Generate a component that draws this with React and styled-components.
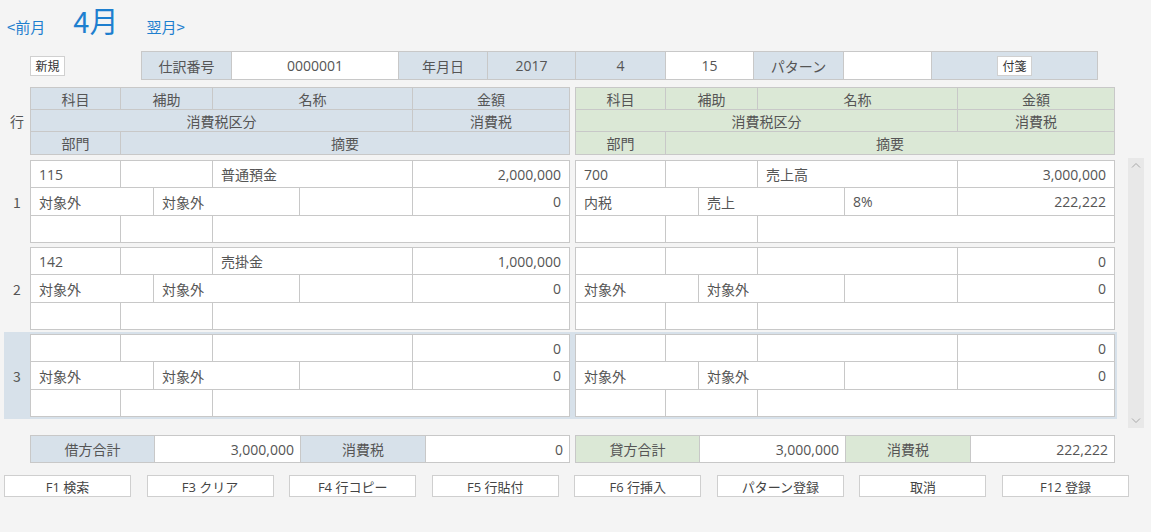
import React from 'react'
import styled, { createGlobalStyle } from 'styled-components'

const BLUE = '#d7e1ea'
const GREEN = '#dbe8d6'
const LINE = '#c8c8c8'

const GlobalStyle = createGlobalStyle`
  body {
    margin: 0;
    background: #f4f4f4;
    font-family: "Open Sans", "Noto Sans CJK JP", sans-serif;
    color: #555;
  }
  * { box-sizing: border-box; }
`

const Page = styled.div`
  width: 1151px;
  height: 532px;
  overflow: hidden;
`

const Nav = styled.div`
  display: flex;
  align-items: baseline;
  height: 51px;
  padding: 3px 0 0 7px;
  color: #1e7fcf;
`
const NavLink = styled.span`
  font-size: 15px;
  font-family: "Noto Sans CJK JP", sans-serif;
`
const Month = styled.span`
  font-size: 29px;
  line-height: 34px;
  margin: 0 28px;
  font-family: "Noto Sans CJK JP", sans-serif;
`

const Toolbar = styled.div`
  display: flex;
  align-items: center;
  height: 29px;
  padding-left: 30px;
`
const SmallButton = styled.div`
  display: flex;
  align-items: center;
  justify-content: center;
  width: ${p => p.$w || 'auto'};
  height: 20px;
  padding: 0 4px;
  white-space: nowrap;
  background: #fff;
  border: 1px solid #d0d0d0;
  font-size: 12px;
  color: #333;
  font-family: "Noto Sans CJK JP", sans-serif;
`
const HeaderBar = styled.div`
  display: grid;
  grid-template-columns: 90px 167px 89px 88px 90px 88px 90px 88px 165px;
  height: 29px;
  margin-left: 76px;
  border: 1px solid ${LINE};
`
const BarCell = styled.div`
  display: flex;
  align-items: center;
  justify-content: center;
  background: ${p => (p.$label ? BLUE : '#fff')};
  border-right: ${p => (p.$last ? 'none' : `1px solid ${LINE}`)};
  font-size: 14px;
`

const Line = styled.div`
  display: flex;
  padding: ${p => p.$pad || '0'};
  margin-top: ${p => p.$mt || '0'};
  background: ${p => (p.$active ? BLUE : 'transparent')};
`
const RowLabel = styled.div`
  width: 26px;
  flex: none;
  display: flex;
  align-items: center;
  justify-content: center;
  font-size: 14px;
  font-family: "Noto Sans CJK JP", sans-serif;
`
const Pair = styled.div`
  display: flex;
  gap: 5px;
`

const Table = styled.div`
  display: grid;
  width: 540px;
  grid-template-columns: 90px 33px 59px 87px 113px 157px;
  grid-template-rows: ${p => p.$rows};
  border-top: 1px solid ${LINE};
  border-left: 1px solid ${LINE};
  background: ${p => p.$bg || '#fff'};
`
const Cell = styled.div`
  grid-column: span ${p => p.$span || 1};
  display: flex;
  align-items: center;
  justify-content: ${p => (p.$right ? 'flex-end' : p.$center ? 'center' : 'flex-start')};
  padding: 0 8px;
  border-right: 1px solid ${LINE};
  border-bottom: 1px solid ${LINE};
  font-size: 14px;
  white-space: nowrap;
`

const ScrollArea = styled.div`
  display: flex;
  height: 270px;
  margin-top: 3px;
`
const Rows = styled.div`
  display: flex;
  flex-direction: column;
  margin-left: 4px;
`
const Scrollbar = styled.div`
  width: 16px;
  margin-left: 11px;
  background: #e8e8e8;
  display: flex;
  flex-direction: column;
  justify-content: space-between;
  align-items: center;
  padding: 4px 0;
`

const TotalsRow = styled.div`
  display: flex;
  gap: 5px;
  margin-top: 7px;
  padding-left: 30px;
`
const TotalBox = styled.div`
  display: grid;
  width: 540px;
  height: 28px;
  grid-template-columns: 124px 146px 125px 143px;
  border: 1px solid ${LINE};
  background: #fff;
`
const TotalCell = styled.div`
  display: flex;
  align-items: center;
  justify-content: ${p => (p.$label ? 'center' : 'flex-end')};
  padding: 0 6px;
  background: ${p => p.$label || '#fff'};
  border-right: ${p => (p.$last ? 'none' : `1px solid ${LINE}`)};
  font-size: 14px;
`

const ButtonBar = styled.div`
  display: grid;
  grid-template-columns: repeat(8, 1fr);
  gap: 15.5px;
  width: 1125px;
  margin: 12px 0 0 4px;
`
const FnButton = styled.div`
  display: flex;
  align-items: center;
  justify-content: center;
  height: 22px;
  background: #fff;
  border: 1px solid #cfcfcf;
  font-size: 13px;
  color: #444;
`

const Chevron = ({ up }) => (
  <svg width="10" height="6" viewBox="0 0 10 6">
    <path
      d={up ? 'M1 5.5 L5 1.5 L9 5.5' : 'M1 0.5 L5 4.5 L9 0.5'}
      fill="none"
      stroke="#a8a8a8"
      strokeWidth="1"
    />
  </svg>
)

function HeaderTable({ bg }) {
  return (
    <Table $bg={bg} $rows="22px 22px 23px">
      <Cell $center>科目</Cell>
      <Cell $center $span={2}>補助</Cell>
      <Cell $center $span={2}>名称</Cell>
      <Cell $center>金額</Cell>
      <Cell $center $span={5}>消費税区分</Cell>
      <Cell $center>消費税</Cell>
      <Cell $center>部門</Cell>
      <Cell $center $span={5}>摘要</Cell>
    </Table>
  )
}

function EntryTable({ top, mid }) {
  return (
    <Table $rows="27px 28px 27px">
      <Cell>{top[0]}</Cell>
      <Cell $span={2}>{top[1]}</Cell>
      <Cell $span={2}>{top[2]}</Cell>
      <Cell $right>{top[3]}</Cell>
      <Cell $span={2}>{mid[0]}</Cell>
      <Cell $span={2}>{mid[1]}</Cell>
      <Cell>{mid[2]}</Cell>
      <Cell $right>{mid[3]}</Cell>
      <Cell />
      <Cell $span={2} />
      <Cell $span={3} />
    </Table>
  )
}

const entries = [
  {
    left: { top: ['115', '', '普通預金', '2,000,000'], mid: ['対象外', '対象外', '', '0'] },
    right: { top: ['700', '', '売上高', '3,000,000'], mid: ['内税', '売上', '8%', '222,222'] },
  },
  {
    left: { top: ['142', '', '売掛金', '1,000,000'], mid: ['対象外', '対象外', '', '0'] },
    right: { top: ['', '', '', '0'], mid: ['対象外', '対象外', '', '0'] },
  },
  {
    left: { top: ['', '', '', '0'], mid: ['対象外', '対象外', '', '0'] },
    right: { top: ['', '', '', '0'], mid: ['対象外', '対象外', '', '0'] },
    active: true,
  },
]

const buttons = ['F1 検索', 'F3 クリア', 'F4 行コピー', 'F5 行貼付', 'F6 行挿入', 'パターン登録', '取消', 'F12 登録']

export default function App() {
  return (
    <Page>
      <GlobalStyle />
      <Nav>
        <NavLink>&lt;前月</NavLink>
        <Month>4月</Month>
        <NavLink>翌月&gt;</NavLink>
      </Nav>

      <Toolbar>
        <SmallButton $w="35px">新規</SmallButton>
        <HeaderBar>
          <BarCell $label>仕訳番号</BarCell>
          <BarCell>0000001</BarCell>
          <BarCell $label>年月日</BarCell>
          <BarCell $label>2017</BarCell>
          <BarCell $label>4</BarCell>
          <BarCell>15</BarCell>
          <BarCell $label>パターン</BarCell>
          <BarCell />
          <BarCell $label $last>
            <SmallButton>付箋</SmallButton>
          </BarCell>
        </HeaderBar>
      </Toolbar>

      <Line $mt="7px" $pad="0 0 0 4px">
        <RowLabel>行</RowLabel>
        <Pair>
          <HeaderTable bg={BLUE} />
          <HeaderTable bg={GREEN} />
        </Pair>
      </Line>

      <ScrollArea>
        <Rows>
          {entries.map((e, i) => (
            <Line key={i} $pad="2px 2px 2px 0" $active={e.active}>
              <RowLabel>{i + 1}</RowLabel>
              <Pair>
                <EntryTable {...e.left} />
                <EntryTable {...e.right} />
              </Pair>
            </Line>
          ))}
        </Rows>
        <Scrollbar>
          <Chevron up />
          <Chevron />
        </Scrollbar>
      </ScrollArea>

      <TotalsRow>
        <TotalBox>
          <TotalCell $label={BLUE}>借方合計</TotalCell>
          <TotalCell>3,000,000</TotalCell>
          <TotalCell $label={BLUE}>消費税</TotalCell>
          <TotalCell $last>0</TotalCell>
        </TotalBox>
        <TotalBox>
          <TotalCell $label={GREEN}>貸方合計</TotalCell>
          <TotalCell>3,000,000</TotalCell>
          <TotalCell $label={GREEN}>消費税</TotalCell>
          <TotalCell $last>222,222</TotalCell>
        </TotalBox>
      </TotalsRow>

      <ButtonBar>
        {buttons.map(b => (
          <FnButton key={b}>{b}</FnButton>
        ))}
      </ButtonBar>
    </Page>
  )
}
